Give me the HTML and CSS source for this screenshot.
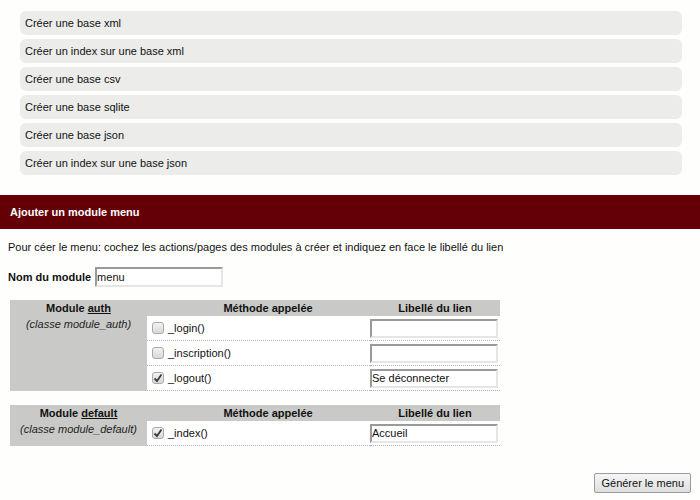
FILE: index.html
```html
<!DOCTYPE html>
<html lang="fr">
<head>
<meta charset="utf-8">
<title>Ajouter un module menu</title>
<link rel="stylesheet" href="styles.css">
</head>
<body>
<ul class="actions">
  <li>Créer une base xml</li>
  <li>Créer un index sur une base xml</li>
  <li>Créer une base csv</li>
  <li>Créer une base sqlite</li>
  <li>Créer une base json</li>
  <li>Créer un index sur une base json</li>
</ul>

<h2 class="panel-title">Ajouter un module menu</h2>

<p class="intro">Pour céer le menu: cochez les actions/pages des modules à créer et indiquez en face le libellé du lien</p>

<div class="name-row">
  <label class="name-label">Nom du module</label>
  <span class="field field-name">menu</span>
</div>

<table class="methods">
  <colgroup><col class="c-mod"><col class="c-meth"><col class="c-lib"></colgroup>
  <tr>
    <th>Module <u>auth</u></th>
    <th class="th-meth">Méthode appelée</th>
    <th>Libellé du lien</th>
  </tr>
  <tr>
    <td class="module" rowspan="3">(classe module_auth)</td>
    <td class="method"><span class="line"><span class="cb"></span>_login()</span></td>
    <td class="lib"><span class="field"></span></td>
  </tr>
  <tr>
    <td class="method"><span class="line"><span class="cb"></span>_inscription()</span></td>
    <td class="lib"><span class="field"></span></td>
  </tr>
  <tr>
    <td class="method"><span class="line"><span class="cb"><svg viewBox="0 0 12 12" width="12" height="12"><path d="M2.5 6.5 L5 9 L9.5 2.5" fill="none" stroke="#3c3c3c" stroke-width="1.8"/></svg></span>_logout()</span></td>
    <td class="lib"><span class="field">Se déconnecter</span></td>
  </tr>
</table>

<table class="methods second">
  <colgroup><col class="c-mod"><col class="c-meth"><col class="c-lib"></colgroup>
  <tr>
    <th>Module <u>default</u></th>
    <th class="th-meth">Méthode appelée</th>
    <th>Libellé du lien</th>
  </tr>
  <tr>
    <td class="module">(classe module_default)</td>
    <td class="method"><span class="line"><span class="cb"><svg viewBox="0 0 12 12" width="12" height="12"><path d="M2.5 6.5 L5 9 L9.5 2.5" fill="none" stroke="#3c3c3c" stroke-width="1.8"/></svg></span>_index()</span></td>
    <td class="lib"><span class="field">Accueil</span></td>
  </tr>
</table>

<div class="submit-row">
  <span class="button">Générer le menu</span>
</div>
</body>
</html>
```
FILE: styles.css
```css
html, body {
  margin: 0;
  padding: 0;
  background: #fefefd;
}
body {
  font-family: "Liberation Sans", Arial, sans-serif;
  font-size: 11px;
  color: #111;
}
.actions {
  list-style: none;
  margin: 11px 18px 0 20px;
  padding: 0;
}
.actions li {
  height: 24px;
  line-height: 24px;
  background: #ecedea;
  border-radius: 6px;
  padding-left: 5px;
  margin-bottom: 4px;
}
.actions li:last-child {
  margin-bottom: 0;
}
.panel-title {
  margin: 20px 0 0;
  height: 34px;
  line-height: 34px;
  padding-left: 10px;
  background: #640005;
  color: #fff;
  font-size: 11px;
  font-weight: bold;
}
.intro {
  margin: 12px 8px 0;
  line-height: 13px;
}
.name-row {
  margin: 13px 8px 0;
  display: flex;
  align-items: center;
  gap: 4px;
}
.name-label {
  font-weight: bold;
}
.field {
  display: inline-block;
  box-sizing: border-box;
  width: 128px;
  height: 19px;
  line-height: 15px;
  padding-left: 0;
  border: 2px solid;
  border-color: #9a9a9a #e6e6e6 #e6e6e6 #9a9a9a;
  background: #fff;
  vertical-align: middle;
}
.field-name {
  height: 20px;
  line-height: 16px;
}
.methods {
  margin: 13px 0 0 10px;
  width: 490px;
  table-layout: fixed;
  border-collapse: separate;
  border-spacing: 0;
  background: #c9cac7;
}
.methods.second {
  margin-top: 14px;
}
.c-mod { width: 137px; }
.c-meth { width: 223px; }
.c-lib { width: 130px; }
.methods th {
  height: 16px;
  padding: 0;
  line-height: 16px;
  font-weight: bold;
  text-align: center;
}
.methods th.th-meth {
  padding-left: 19px;
}
.methods td {
  padding: 0;
}
.methods td.module {
  vertical-align: top;
  text-align: center;
  font-style: italic;
  line-height: 13px;
  padding-top: 2px;
  color: #222;
}
.methods td.method,
.methods td.lib {
  background: #fff;
  height: 25px;
  box-sizing: border-box;
  border-bottom: 1px dotted #b4b4b4;
  vertical-align: middle;
}
.methods td.method {
  padding-left: 5px;
}
.line {
  display: flex;
  align-items: center;
  gap: 4px;
}
.cb {
  box-sizing: border-box;
  width: 12px;
  height: 12px;
  border: 1px solid #a9a9a9;
  border-radius: 3px;
  background: linear-gradient(#f2f2f2, #d9d9d9);
  display: flex;
  align-items: center;
  justify-content: center;
  overflow: hidden;
}
.cb svg {
  flex: none;
}
.submit-row {
  display: flex;
  justify-content: flex-end;
  margin-top: 27px;
  padding-right: 9px;
}
.button {
  box-sizing: border-box;
  height: 20px;
  line-height: 18px;
  padding: 0 6px;
  border: 1px solid #9c9c9c;
  border-radius: 2px;
  background: linear-gradient(#f6f6f6, #dedede);
  color: #111;
}
```
